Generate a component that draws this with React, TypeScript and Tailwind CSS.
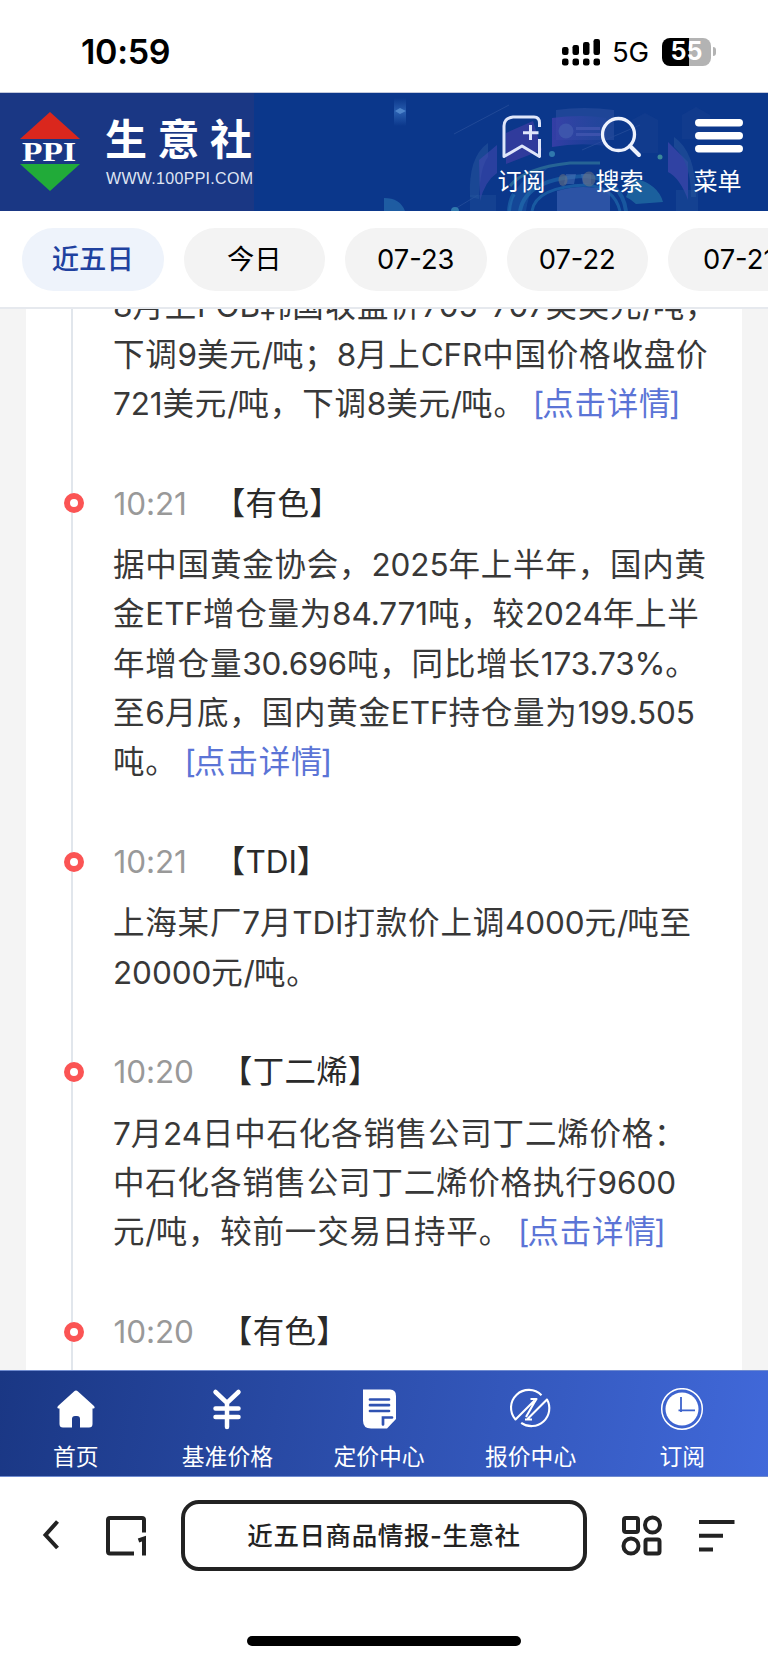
import React from "react";

const FONT = "font-['Inter','Noto_Sans_CJK_SC',sans-serif]";

type Item = { time?: string; tag?: string; lines: string[]; link?: boolean };

const ITEMS: Item[] = [
  { lines: ["8月上FOB韩国收盘价705-707美美元/吨，", "下调9美元/吨；8月上CFR中国价格收盘价", "721美元/吨，下调8美元/吨。"], link: true },
  {
    time: "10:21",
    tag: "【有色】",
    lines: ["据中国黄金协会，2025年上半年，国内黄", "金ETF增仓量为84.771吨，较2024年上半", "年增仓量30.696吨，同比增长173.73%。", "至6月底，国内黄金ETF持仓量为199.505", "吨。"],
    link: true,
  },
  { time: "10:21", tag: "【TDI】", lines: ["上海某厂7月TDI打款价上调4000元/吨至", "20000元/吨。"] },
  { time: "10:20", tag: "【丁二烯】", lines: ["7月24日中石化各销售公司丁二烯价格：", "中石化各销售公司丁二烯价格执行9600", "元/吨，较前一交易日持平。"], link: true },
  { time: "10:20", tag: "【有色】", lines: [] },
];

// Latin letters and digits are set tighter than the Chinese text around them.
function Mixed({ text }: { text: string }) {
  return (
    <>
      {text.split(/([A-Za-z0-9.%:\/-]+)/).map((part, i) =>
        i % 2 ? (
          <span key={i} className={part === "/" ? "tracking-[-1px]" : "tracking-[-0.1px]"}>
            {part}
          </span>
        ) : (
          part
        ),
      )}
    </>
  );
}

function StatusBar() {
  return (
    <div className="flex h-[92px] shrink-0 items-center bg-white pl-[81px] pr-[52px] pt-[11px]">
      <div className="text-[34px] font-semibold leading-none tracking-[-0.3px] text-black">10:59</div>
      <div className="ml-auto flex items-center">
        <svg width="40" height="28" viewBox="0 0 40 28" fill="#000">
          <rect x="1" y="9" width="6.5" height="8" rx="2.2" />
          <rect x="11.5" y="7" width="6.5" height="10" rx="2.2" />
          <rect x="22" y="4" width="6.5" height="13" rx="2.2" />
          <rect x="32.5" y="1" width="6.5" height="16" rx="2.2" />
          <rect x="1" y="20.5" width="6.5" height="7" rx="2.2" />
          <rect x="11.5" y="20.5" width="6.5" height="7" rx="2.2" />
          <rect x="22" y="20.5" width="6.5" height="7" rx="2.2" />
          <rect x="32.5" y="20.5" width="6.5" height="7" rx="2.2" />
        </svg>
        <div className="ml-[11px] w-[38px] pt-[2px] text-[27.500px] leading-none tracking-[-0.3px] text-black">5G</div>
        <div className="ml-3 flex h-[28px] w-[49px] items-center justify-center rounded-[8px] bg-[linear-gradient(90deg,#000_27px,#b3b3b3_27px)] text-[25px] font-bold leading-none text-white">55</div>
        <div className="ml-[2px] h-[9px] w-[3px] rounded-r-full bg-[#b3b3b3]" />
      </div>
    </div>
  );
}

function Logo() {
  return (
    <div className="flex h-full w-[254px] shrink-0 bg-[#1a3784] pl-5">
      <svg className="mt-[19px] shrink-0" width="60" height="80" viewBox="0 0 60 80">
        <path d="M30 0L60 27H0Z" fill="#da271d" />
        <path d="M0 52H60L30 79Z" fill="#21ab39" />
        <text x="2" y="49" fill="#fff" fontSize="27" fontWeight="700" fontFamily="Liberation Serif" textLength="54" lengthAdjust="spacingAndGlyphs">PPI</text>
      </svg>
      <div className="ml-[25px] flex flex-col pt-[23px]">
        <div className="whitespace-nowrap text-[42px] font-bold leading-[48px] tracking-[10.500px] text-white">生意社</div>
        <div className="mt-[4px] whitespace-nowrap pl-[1px] font-['Liberation_Sans',sans-serif] text-[16px] leading-[22px] tracking-[0.300px] text-[#dfe5f3]">WWW.100PPI.COM</div>
      </div>
    </div>
  );
}

function HeaderArt() {
  return (
    <svg className="absolute inset-0" width="514" height="118" viewBox="254 93 514 118">
      <defs>
        <linearGradient id="beam" x1="0" y1="0" x2="0" y2="1">
          <stop offset="0" stopColor="#3d78c8" stopOpacity="0" />
          <stop offset=".5" stopColor="#3d78c8" stopOpacity=".6" />
          <stop offset="1" stopColor="#3d78c8" stopOpacity="0" />
        </linearGradient>
        <linearGradient id="violet" x1="0" y1="0" x2="1" y2="0">
          <stop offset="0" stopColor="#4240ae" />
          <stop offset="1" stopColor="#2447a0" stopOpacity=".6" />
        </linearGradient>
      </defs>
      <rect x="394" y="98" width="12" height="28" fill="url(#beam)" />
      <path d="M395 111l5-3 6 3-6 3z" fill="#4f86cc" />
      <path d="M454 134L509 105M582 150L640 125M448 213L478 195" stroke="#2f55a0" strokeWidth="1" opacity=".6" />
      <path d="M556 110q28-4 58 0v30h-58z" fill="#23489a" opacity=".8" />
      <path d="M552 118q30-4 54 0v28q-26-4-54 1z" fill="url(#violet)" opacity=".75" />
      <circle cx="566" cy="131" r="7.500" fill="#3d55ac" />
      <path d="M576 127h24v3h-24zM576 133h24v3h-24z" fill="#3c52ac" />
      <path d="M506 133l27-12 9 29-36 14z" fill="#5640ae" opacity=".5" />
      <path d="M470 197q-2-40 18-54v14q-8 10-9 42z" fill="#24519b" opacity=".6" />
      <path d="M479 160l18-15v28q-12 8-17 28z" fill="#4a49b4" opacity=".5" />
      <path d="M668 142l20 20v38q-8-22-20-28z" fill="#4a49b4" opacity=".6" />
      <path d="M674 137q22 15 22 60h-5q0-35-17-50z" fill="#24519b" opacity=".6" />
      <path d="M632 120l13-7 13 7v33h-26zM682 115l14-8 14 8v24h-28z" fill="#1b4290" opacity=".4" />
      <path d="M508 211q6-34 40-43q-18 14-22 43z" fill="#2468b0" opacity=".35" />
      <path d="M509 211q1-12 5-17M520 211q6-33 66-35q36 4 40 35" fill="none" stroke="#277eb8" strokeWidth="4" opacity=".45" />
      <path d="M532 211q4-24 54-26q28 2 34 26" fill="none" stroke="#277eb8" strokeWidth="3" opacity=".5" />
      <path d="M510 186q14-18 60-23l30 0" fill="none" stroke="#38829d" strokeWidth="3" opacity=".6" />
      <path d="M634 178q24 6 29 24l-27 2q-4-4-10-7z" fill="#2a83ad" opacity=".55" />
      <path d="M557 211v-20q26-8 53 0v20z" fill="#3a5fb0" opacity=".7" />
      <path d="M566 174l10 0l-2 10h-10zM581 174h10v10h-8z" fill="#4c74b8" opacity=".5" />
      <ellipse cx="563" cy="180" rx="4.500" ry="6" fill="#646f83" opacity=".6" />
      <ellipse cx="589" cy="179" rx="6.500" ry="7.500" fill="#646f83" opacity=".6" />
      <circle cx="552" cy="154" r="3" fill="#2f78ad" />
      <circle cx="660" cy="157" r="2.500" fill="#3b8899" />
      <circle cx="455" cy="211" r="4" fill="#2f78ad" />
      <path d="M384 198q16 0 21 13h-21z" fill="#2b75b3" opacity=".6" />
      <path d="M470 195h26v16h-26zM676 190h22v21h-22z" fill="#26559f" opacity=".35" />
    </svg>
  );
}

function Header() {
  return (
    <header className="flex h-[119px] shrink-0 border-t border-[#c3c9dc] bg-[#0b378b]">
      <Logo />
      <div className="relative flex-1 overflow-hidden">
        <HeaderArt />
        <div className="relative flex h-full text-[24px] leading-[30px] text-white">
          <div className="ml-[218.500px] flex w-[98px] shrink-0 flex-col items-center pt-[20px]">
            <svg width="44" height="48" viewBox="0 0 44 48" fill="none" stroke="#dfe6fa" strokeWidth="3" strokeLinecap="butt" strokeLinejoin="round">
              <path d="M39.500 14V10Q39.500 4 34 4H13Q4 5 4 13V43.500L22 33L39.500 43.500V26M30.500 12V27M23 19.700H38.500" />
            </svg>
            <span className="mt-[6px]">订阅</span>
          </div>
          <div className="flex w-[98px] shrink-0 flex-col items-center pt-[20px]">
            <svg width="44" height="48" viewBox="0 0 44 48" fill="none" stroke="#eef2fd" strokeWidth="3.300" strokeLinecap="round">
              <circle cx="20.500" cy="21.500" r="16" />
              <path d="M32 33L41 42" strokeWidth="4" />
            </svg>
            <span className="mt-[6px]">搜索</span>
          </div>
          <div className="flex w-[98px] shrink-0 flex-col items-center pt-[20px]">
            <svg className="ml-[2px]" width="50" height="48" viewBox="0 0 50 48" fill="#fff">
              <rect x="1" y="6" width="48" height="7.500" rx="3.700" />
              <rect x="1" y="19" width="48" height="7.500" rx="3.700" />
              <rect x="1" y="32" width="48" height="7.500" rx="3.700" />
            </svg>
            <span className="mt-[6px]">菜单</span>
          </div>
        </div>
      </div>
    </header>
  );
}

const TABS = ["近五日", "今日", "07-23", "07-22", "07-21"];

function Tabs() {
  return (
    <div className="flex h-[98px] shrink-0 gap-5 overflow-hidden border-b-2 border-[#e6e9ee] bg-white pl-[22px] pt-[17px]">
      {TABS.map((t, i) => (
        <div
          key={t}
          className={
            "flex h-[63px] w-[141.500px] shrink-0 items-center justify-center rounded-full pt-[2px] text-[27.300px] " +
            (i === 0 ? "bg-[#eef3fb] font-medium text-[#1f419f]" : "bg-[#f3f3f3] text-black")
          }
        >
          {t}
        </div>
      ))}
    </div>
  );
}

function Entry({ item }: { item: Item }) {
  return (
    <section className="pb-[50.500px]">
      {item.time && (
        <div className="mb-[12.200px] flex h-[49.250px] items-center leading-[49.250px]">
          <div className="-ml-[49.500px] mr-[30px] h-5 w-5 shrink-0 rounded-full border-[6px] border-[#fb5454] bg-white" />
          <span className="text-[#999]">{item.time && <Mixed text={item.time} />}</span>
          <span className="ml-[27px] text-[#2a2a2a] tracking-[0.300px]">
            <Mixed text={item.tag ?? ""} />
          </span>
        </div>
      )}
      {item.lines.map((l, i) => (
        <div key={l} className="flex h-[49.250px] items-center whitespace-nowrap leading-[49.250px]">
          <span>
            <Mixed text={l} />
          </span>
          {item.link && i === item.lines.length - 1 && (
            <a className="ml-[7px] text-[#5b74d6]">
              <span className="tracking-[-2px]">[</span>点击详情<span className="-ml-[2.500px]">]</span>
            </a>
          )}
        </div>
      ))}
    </section>
  );
}

function Feed() {
  return (
    <main className="h-[1061px] shrink-0 overflow-hidden bg-[#f4f4f4] pl-[26px] pr-[26px]">
      <div className="flex h-full flex-col overflow-hidden bg-white pl-[45px]">
        <div className="-mt-[28.500px] h-[1100px] shrink-0 border-l-2 border-[#e1e6ec] pl-[40px] text-[31.500px] tracking-[0.800px] text-[#383838]">
          {ITEMS.map((it, i) => (
            <Entry key={i} item={it} />
          ))}
        </div>
      </div>
    </main>
  );
}

const NAV = [
  {
    label: "首页",
    icon: <path d="M22 2.500q1 0 2 1L40 18q1.500 2-.5 2.500H38.500V36q0 3.500-3.500 3.500H26V31q0-3-3-3H21q-3 0-3 3v8.500H9q-3.500 0-3.500-3.500V20.500H4.500q-2-.5-.5-2.500L20 3.500q1-1 2-1z" fill="#fff" />,
  },
  {
    label: "基准价格",
    icon: <path d="M10.500 4L22 15L33.500 4M22 15V39M10.500 20.500H33.500M10.500 29H33.500" fill="none" stroke="#fff" strokeWidth="4.500" strokeLinecap="round" />,
  },
  {
    label: "定价中心",
    icon: (
      <>
        <path d="M6 1.500H33Q39 1.500 39 8V31L30 40.500H14Q6 40.500 6 32.500Z" fill="#fff" />
        <path d="M13 11.500H32M13 17.200H32M13 23H32M26 36.500V29.500H35" fill="none" stroke="#2f52b2" strokeWidth="2.700" strokeLinecap="round" />
      </>
    ),
  },
  {
    label: "报价中心",
    icon: (
      <path
        d="M32.500 7.200A17.800 17.800 0 0 0 6.500 31.500L25.500 12.500M21.500 11H27.500L25 15L17 29M12.200 34.800A17.800 17.800 0 0 0 38 11.500L18.500 31M16 31.500H23"
        fill="none"
        stroke="#fff"
        strokeWidth="2.100"
        strokeLinejoin="round"
      />
    ),
  },
  {
    label: "订阅",
    icon: (
      <>
        <circle cx="22" cy="21" r="20.300" fill="none" stroke="#fff" strokeWidth="1.500" />
        <circle cx="22" cy="21" r="16.500" fill="#fff" />
        <path d="M21 9V24M18.500 22.300H35" stroke="#3d63cc" strokeWidth="1.800" />
      </>
    ),
  },
];

function BottomNav() {
  return (
    <nav className="flex h-[107px] shrink-0 border-y border-[#6f8bd0] bg-[linear-gradient(100deg,#1a3784_0%,#4169da_100%)]">
      {NAV.map((n) => (
        <div key={n.label} className="flex w-[151.600px] shrink-0 flex-col items-center pt-[17px]">
          <svg width="44" height="43" viewBox="0 0 44 43">
            {n.icon}
          </svg>
          <span className="mt-[11px] text-[22.800px] leading-[30px] text-white">{n.label}</span>
        </div>
      ))}
    </nav>
  );
}

function BrowserBar() {
  return (
    <footer className="flex flex-1 flex-col items-center bg-white">
      <div className="flex w-full pt-[23px]">
        <svg className="ml-[42px] mt-[19px] shrink-0" width="18" height="32" viewBox="0 0 18 32" fill="none" stroke="#222" strokeWidth="4">
          <path d="M15.500 2.500L3.500 16L15.500 29" />
        </svg>
        <svg className="ml-[45px] mt-[15px] shrink-0" width="41" height="41" viewBox="0 0 41 41" fill="none" stroke="#222" strokeWidth="4">
          <path d="M39 17.500V5Q39 3 37 3H5Q3 3 3 5V36.500Q3 38.500 5 38.500H29M33.500 25.500L39 23.500V40.500" />
        </svg>
        <div className="ml-[35px] flex h-[71px] w-[406px] shrink-0 items-center justify-center rounded-[18px] border-4 border-[#222] pt-[2px] text-[25.500px] font-medium tracking-[0.600px] text-[#222]">
          近五日商品情报-生意社
        </div>
        <svg className="ml-[34px] mt-[15px] shrink-0" width="42" height="41" viewBox="0 0 42 41" fill="none" stroke="#222" strokeWidth="4">
          <rect x="3" y="3" width="14" height="14" rx="2" />
          <circle cx="31.500" cy="10" r="7.500" />
          <circle cx="10" cy="31" r="7.500" />
          <rect x="24.500" y="24.500" width="14" height="14" rx="2" />
        </svg>
        <svg className="ml-[35px] mt-[19px] shrink-0" width="38" height="34" viewBox="0 0 38 34" stroke="#222" strokeWidth="4">
          <path d="M1 3H36.500M1 16.700H25M1 30.500H15" />
        </svg>
      </div>
      <div className="mt-[65px] h-[10px] w-[274px] rounded-full bg-black" />
    </footer>
  );
}

export default function App() {
  return (
    <div className={"flex h-[1663px] w-[768px] flex-col overflow-hidden bg-white " + FONT}>
      <StatusBar />
      <Header />
      <Tabs />
      <Feed />
      <BottomNav />
      <BrowserBar />
    </div>
  );
}
